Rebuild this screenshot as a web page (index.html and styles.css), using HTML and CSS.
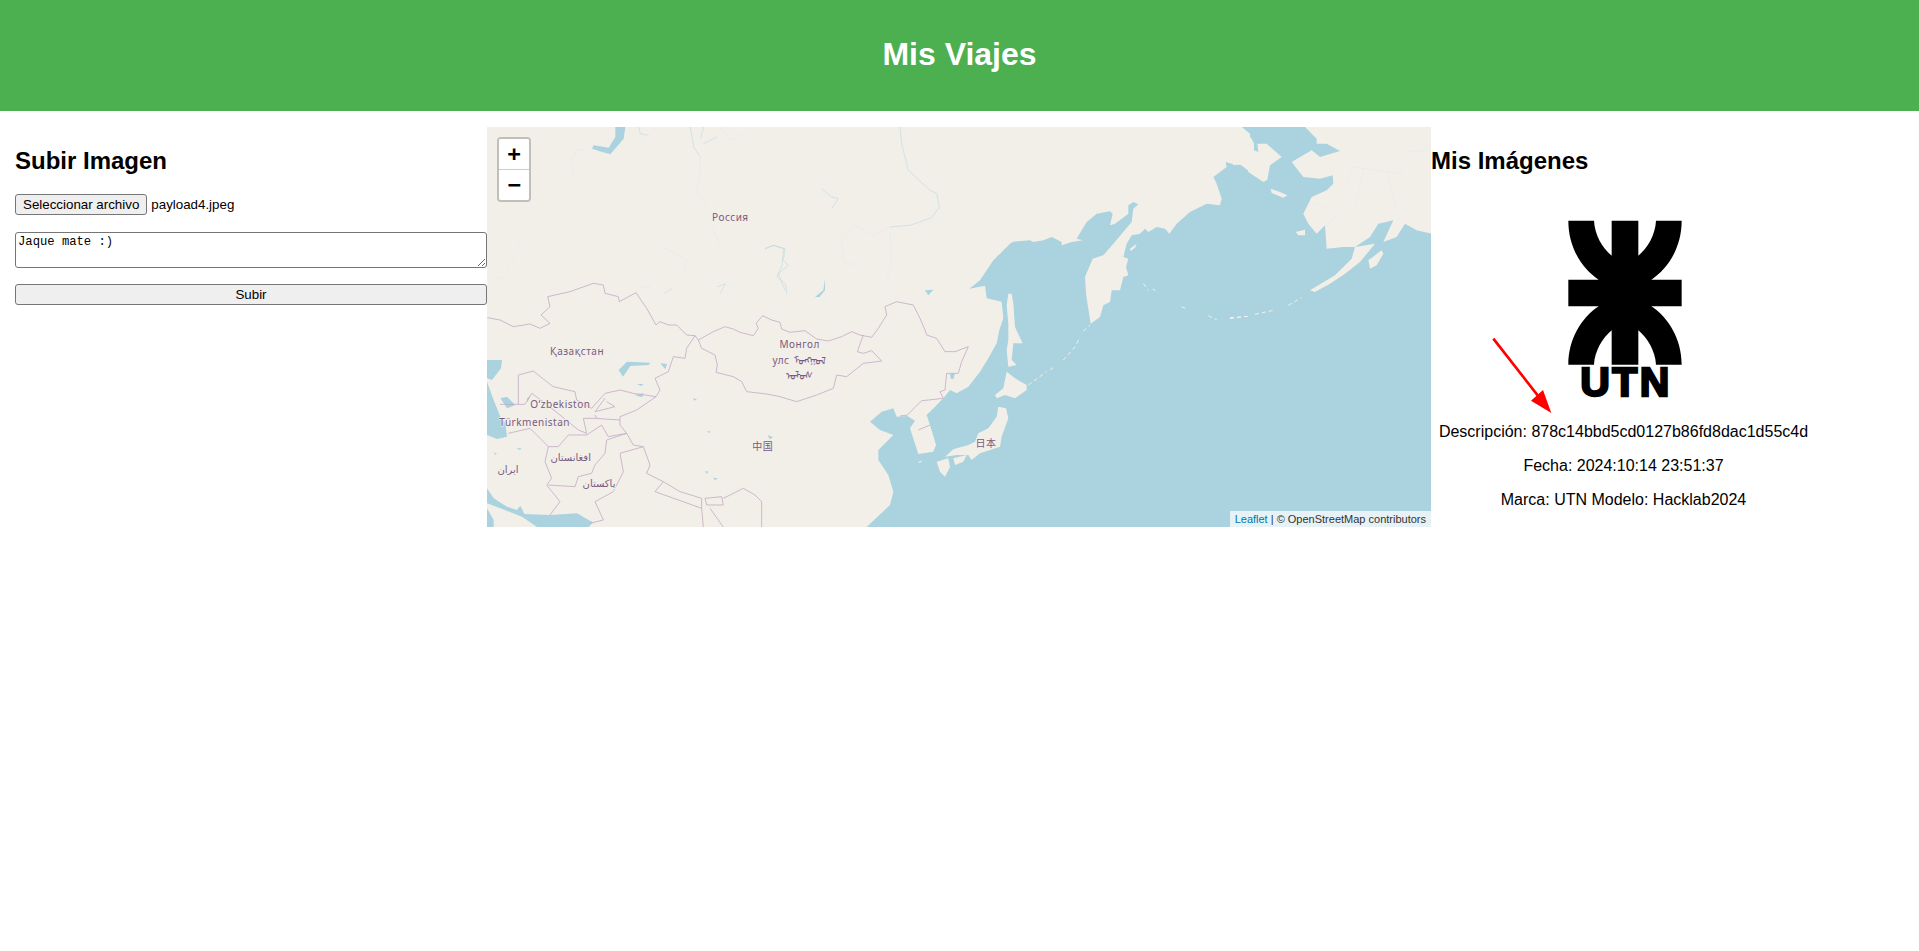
FILE: index.html
```html
<!DOCTYPE html>
<html>
<head>
    <meta charset="utf-8">
    <title>Mis Viajes</title>
    <link rel="stylesheet" href="styles.css">
</head>
<body>
    <header class="top"><h1>Mis Viajes</h1></header>
    <div class="layout">
        <section class="upload">
            <h2>Subir Imagen</h2>
            <div class="file-row"><button class="btn" type="button">Seleccionar archivo</button><span class="file-name">payload4.jpeg</span></div>
            <textarea class="desc">Jaque mate :)</textarea>
            <button class="btn btn-wide" type="button">Subir</button>
        </section>

        <div class="map">
            <svg class="tiles" viewBox="21 6 2832 1200" preserveAspectRatio="none">
                <rect class="sea" x="21" y="6" width="2832" height="1200"/>
                <!-- continente oeste -->
                <path class="land" d="M21,6 1600,6 1600,350 1590,356 1540,406 1500,466 1468,491 1515,482 1520,520 1565,530 1570,580 1558,615 1550,655 1525,700 1500,740 1465,785 1430,805 1410,795 1390,820 1365,845 1340,870 1350,900 1368,960 1360,980 1315,987 1290,910 1305,887 1282,873 1250,875 1240,850 1205,860 1170,890 1200,915 1240,930 1195,975 1195,1005 1225,1050 1240,1100 1230,1140 1160,1206 21,1206Z"/>
                <path class="land" d="M1585,506 1595,506 1600,536 1605,606 1628,655 1600,655 1595,705 1610,720 1585,725 1580,675 1585,645 1585,596 1580,541Z"/>
                <!-- costa de Siberia -->
                <g transform="translate(1560 6)">
                    <path class="land" d="M-40,380 0,380 25,345 90,340 100,345 130,340 155,330 185,345 185,355 215,345 248,340 230,335 260,285 290,260 330,253 338,260 330,295 345,290 385,260 385,235 400,225 415,232 400,245 395,285 340,350 310,385 278,395 255,450 258,500 272,590 300,570 310,535 330,525 335,490 360,490 370,450 385,445 378,420 385,395 370,390 380,350 395,325 420,320 435,305 445,315 470,300 495,305 508,320 530,290 570,255 620,230 660,235 665,215 650,170 640,150 680,120 675,95 695,85 700,115 720,112 750,135 750,20 725,0 -40,0Z"/>
                    <path class="land" d="M390,365 410,350 405,362 392,372Z"/>
                    <path class="isles" d="M430,470 445,490M458,486 466,491M545,540 560,545M625,566 650,578M690,572 745,568M250,612 270,595M230,650 240,630"/>
                </g>
                <!-- Alaska y Chukotka -->
                <g transform="translate(2250 6)">
                    <path class="land" d="M-30,0 35,0 65,35 72,50 72,70 85,75 82,50 110,50 155,90 120,115 112,158 100,165 55,135 50,115 10,112 -30,100Z"/>
                    <path class="land" d="M225,0 260,35 260,50 290,50 330,72 270,90 245,70 185,105 220,150 270,155 308,145 310,170 290,190 245,210 220,260 235,290 260,320 285,295 290,365 340,360 375,360 420,330 445,290 490,280 460,345 500,330 525,290 560,310 605,320 605,0Z"/>
                    <path class="land" d="M375,360 365,395 315,445 290,460 240,490 255,495 300,470 345,440 390,405 435,350Z"/>
                    <path class="land" d="M415,400 455,370 460,380 440,415 420,425Z"/>
                    <path class="land" d="M122,185 150,195 172,205 160,212 125,198Z"/>
                    <path class="land" d="M197,315 225,308 225,325 205,325Z"/>
                    <path class="isles" d="M175,535 215,512M75,562 130,550M0,575 50,568"/>
                    <path class="river" d="M345,170 370,120 440,130 520,140M320,265 290,300M250,225 300,250M530,75 590,70M400,130 380,230M470,130 500,250"/>
                </g>
                <!-- Japon -->
                <g transform="translate(1260 615)">
                    <path class="land" d="M320,125 345,145 380,165 380,180 345,205 315,195 290,205 285,195 310,175 315,150Z"/>
                    <path class="land" d="M295,230 318,235 325,265 305,320 300,350 270,360 240,370 215,390 205,375 170,375 135,380 160,358 205,345 225,335 235,310 265,295 290,260Z"/>
                    <path class="land" d="M160,385 200,375 190,395 165,405Z"/>
                    <path class="land" d="M110,395 145,385 150,410 135,440 120,425Z"/>
                    <path class="land" d="M55,395 66,392 64,397 55,398Z"/>
                    <path class="isles" d="M385,165 440,125M450,120 467,108M490,90 530,45"/>
                    <path class="sea" d="M150,132 165,130 160,148 152,146Z"/>
                </g>
                <!-- mares y lagos del oeste -->
                <g transform="translate(21 705)">
                    <path class="sea" d="M0,0 45,0 42,25 15,60 0,55ZM0,65 20,120 40,170 55,190 60,230 30,237 0,225ZM40,115 60,110 85,135 60,145ZM0,385 20,415 60,440 90,450 100,437 112,462 190,465 270,460 305,480 318,487 305,501 150,501 105,470 40,445 0,430ZM0,445 20,480 20,501 0,501ZM395,30 420,5 490,8 485,15 430,18 408,50ZM520,10 540,12 535,28ZM442,105 470,100 465,112ZM450,72 470,72 462,78ZM20,278 30,280 25,284ZM88,265 104,265 98,270ZM618,115 630,118 622,122ZM655,333 665,335 658,341ZM678,353 692,355 684,361ZM842,225 858,232 848,238ZM660,213 672,215 665,219ZM120,115 130,108 122,126Z"/>
                </g>
                <!-- rios -->
                <g transform="translate(21 6)">
                    <path class="sea" d="M385,0 415,0 410,35 370,82 345,75 315,65 320,55 365,62 385,30Z"/>
                    <path class="river-main" d="M610,0 620,60 640,90M640,35 650,0M650,50 690,30M455,0 460,20 485,25M835,365 860,355 890,365 885,415 870,450 895,470 900,500M690,480 715,470 700,500M530,500 555,485"/>
                    <path class="river" d="M640,90 640,130 630,190 660,235M675,305 700,350M250,100 270,70 300,65M255,100 260,150M60,420 85,395M85,365 100,345M30,450 50,455M460,480 490,480M530,360 600,400 590,440M510,170 520,168M700,0 730,40 770,20"/>
                </g>
                <g transform="translate(840 6)">
                    <path class="sea" d="M195,455 190,490 165,510 178,510 195,490Z"/>
                    <path class="sea" d="M495,490 520,488 505,505Z"/>
                    <path class="river-main" d="M420,0 425,50 445,130 510,190 530,200 538,240 515,272 450,295 390,300M185,185 215,210 235,215 215,245M15,365 40,355 75,365 70,400 85,415 55,440 75,490"/>
                    <path class="river" d="M390,300 340,325 285,295 245,340 250,400 295,420M390,310 395,400 380,460"/>
                </g>
                <path class="border" d="M22,578 60,585 100,605 150,597 180,610 210,595 183,570 210,545 203,515 270,500 340,475 370,480 375,505 415,515 418,530 468,503 500,550 528,600 540,590 565,600 590,600 620,630 645,632 655,645 700,620 735,605 760,612 780,622 820,632 835,610 828,595 848,572 875,585 900,592 905,612 930,622 975,617 1010,642 1045,648 1085,635 1115,620 1140,630 1175,637 1195,610 1220,570 1215,545 1250,530 1300,540 1320,580 1335,615 1340,630 1370,640 1395,680 1425,680 1465,665 1445,710 1435,745 1400,745 1395,795 1380,800 1390,820 1345,825 1325,827 1282,870 1260,873M1315,915 1350,900"/>
                <path class="border" d="M655,645 665,670 705,690 712,720 708,742 760,755 785,770 800,800 860,807 900,815 950,830 1010,810 1060,790 1070,750 1100,755 1150,715 1205,708 1175,677 1150,685 1132,680 1150,630"/>
                <path class="border" d="M645,632 620,670 615,700 580,695 565,740 525,760 540,795 528,815 470,855 420,875 420,900 440,925M115,838 115,750 160,738 200,770 220,785 285,800 290,825 335,850 375,805 420,795 460,805 528,815M60,838 135,838 155,805 190,830 240,870 295,915 320,925 310,880 345,880 420,885M375,820 345,860 405,845 380,830M345,870 350,880M85,925 150,910 205,965 235,965 265,930 320,930 365,900 385,935 440,925"/>
                <path class="border" d="M205,965 195,1010 215,1060 200,1080 240,1130 210,1170M440,925 380,945 375,985 345,1020 335,1045 295,1055 285,1085 205,1080M440,925 460,960 490,965 420,985 430,1040 400,1100 345,1130 370,1185 330,1195M490,965 510,1020 500,1045 550,1070 600,1100 665,1120 665,1150 525,1100 550,1070M675,1120 725,1115 730,1140 680,1140 675,1120M665,1150 670,1206M730,1120 790,1090 825,1110 845,1130 845,1206M690,1150 730,1206"/>
                <text class="map-label" x="751" y="289" text-anchor="middle">Россия</text>
                <text class="map-label" x="291" y="691" text-anchor="middle">Қазақстан</text>
                <text class="map-label" x="959" y="669" text-anchor="middle">Монгол</text>
                <text class="map-label" x="903" y="717" text-anchor="middle">улс</text>
                <text class="map-label" x="990" y="717" text-anchor="middle">ᠮᠣᠩᠭᠣᠯ</text>
                <text class="map-label" x="958" y="763" text-anchor="middle">ᠤᠯᠤᠰ</text>
                <text class="map-label" x="241" y="848" text-anchor="middle">O‘zbekiston</text>
                <text class="map-label" x="164" y="902" text-anchor="middle">Türkmenistan</text>
                <text class="map-label" x="272" y="1009" text-anchor="middle">افغانستان</text>
                <text class="map-label" x="84" y="1043" text-anchor="middle">ایران</text>
                <text class="map-label" x="357" y="1085" text-anchor="middle">پاکستان</text>
                <text class="map-label" x="848" y="974" text-anchor="middle">中国</text>
                <text class="map-label" x="1518" y="967" text-anchor="middle">日本</text>
            </svg>
            <div class="zoom-ctl">
                <a class="zoom-btn">+</a>
                <a class="zoom-btn">−</a>
            </div>
            <div class="attrib"><a>Leaflet</a> | © OpenStreetMap contributors</div>
        </div>

        <section class="gallery">
            <h2>Mis Imágenes</h2>
            <div class="item">
                <svg class="photo" viewBox="205 193 810 666">
                    <path d="M443,273 H520 C522,315 545,355 573,378 V273 H653 V378 C681,355 704,315 706,273 H783 C783,350 745,415 692,450 H783 V530 H692 C745,565 783,630 783,705 H706 C704,665 681,625 653,602 V705 H573 V602 C545,625 522,665 520,705 H443 C443,630 481,565 534,530 H443 V450 H534 C481,415 443,350 443,273 Z"/>
                    <text class="logo-text" x="616" y="798" text-anchor="middle">UTN</text>
                    <path class="arrow-line" d="M218,627 365,815"/>
                    <path class="arrow-head" d="M392,850 331,813 367,781Z"/>
                </svg>
                <p>Descripción: 878c14bbd5cd0127b86fd8dac1d55c4d</p>
                <p>Fecha: 2024:10:14 23:51:37</p>
                <p>Marca: UTN Modelo: Hacklab2024</p>
            </div>
        </section>
    </div>
</body>
</html>
```

FILE: styles.css
```css
body,html{padding: 0px;margin: 0px;}
body{font-family: "Liberation Sans", Arial, sans-serif;color:#000;background:#fff;}

.top{
	background:#4CAF50;
	height:111px;
	display:flex;
	align-items:center;
	justify-content:center;
	color:#fff;
}
.top h1{margin:0;font-size:32px;position:relative;top:-1px;}

.layout{display:flex;margin-top:16px;}
h2{font-size:24px;margin:20px 0;line-height:27px;}

.upload{width:472px;padding-left:15px;box-sizing:content-box;}
.file-row{display:flex;align-items:center;height:21px;margin-bottom:17px;}
.btn{
	font-family:"Liberation Sans", Arial, sans-serif;
	font-size:13.33px;
	height:21px;
	padding:1px 7px;
	background:#efefef;
	border:1px solid #767676;
	border-radius:3px;
	color:#000;
}
.file-name{font-size:13.33px;margin-left:4px;}
.btn-wide{display:block;width:100%;}
.desc{
	display:block;
	width:100%;
	height:36px;
	box-sizing:border-box;
	margin-bottom:16px;
	padding:2px;
	border:1px solid #767676;
	border-radius:3px;
	font-family:"Liberation Mono", monospace;
	font-size:12.2px;
}

.map{position:relative;width:944px;height:400px;overflow:hidden;}
.tiles{display:block;width:100%;height:100%;}
.land{fill:#f2efe9;}
.sea{fill:#aad3df;}
.river{fill:none;stroke:#aad3df;stroke-width:2;opacity:.18;}
.river-main{fill:none;stroke:#aad3df;stroke-width:2.5;opacity:.55;}
.border{fill:none;stroke:#c4acc6;stroke-width:2.5;}
.isles{fill:none;stroke:#f2efe9;stroke-width:3;stroke-dasharray:12 9;}
.map-label{
	font-family:"Noto Sans", "DejaVu Sans", "Noto Sans CJK SC", sans-serif;
	font-size:30px;
	letter-spacing:1.5px;
	fill:#7a5a80;
	stroke:#f2efe9;
	stroke-width:4px;
	paint-order:stroke;
}

.zoom-ctl{
	position:absolute;
	top:10px;
	left:10px;
	width:30px;
	border:2px solid rgba(0,0,0,.2);
	border-radius:4px;
	background-clip:padding-box;
}
.zoom-btn{
	display:block;
	width:30px;
	height:30px;
	text-align:center;
	background:#fff;
	font:bold 22px/30px "DejaVu Sans Mono", "Liberation Mono", monospace;
	color:#000;
	border-bottom:1px solid #ccc;
	box-sizing:content-box;
}
.zoom-btn:first-child{border-radius:2px 2px 0 0;}
.zoom-btn:last-child{border-bottom:none;border-radius:0 0 2px 2px;}

.attrib{
	position:absolute;
	right:0;
	bottom:0;
	padding:0 5px;
	background:rgba(255,255,255,.7);
	font-size:11px;
	line-height:16px;
	color:#333;
}
.attrib a{color:#0078A8;}

.gallery{flex:1;}
.item{width:385px;text-align:center;}
.item p{margin:16px 0;font-size:16px;line-height:18px;}
.photo{display:block;width:270px;height:222px;margin:0 auto -9px;}
.logo-text{font-size:123px;font-weight:bold;letter-spacing:7px;stroke:#000;stroke-width:7px;}
.arrow-line{fill:none;stroke:#f00;stroke-width:8;}
.arrow-head{fill:#f00;}
```
